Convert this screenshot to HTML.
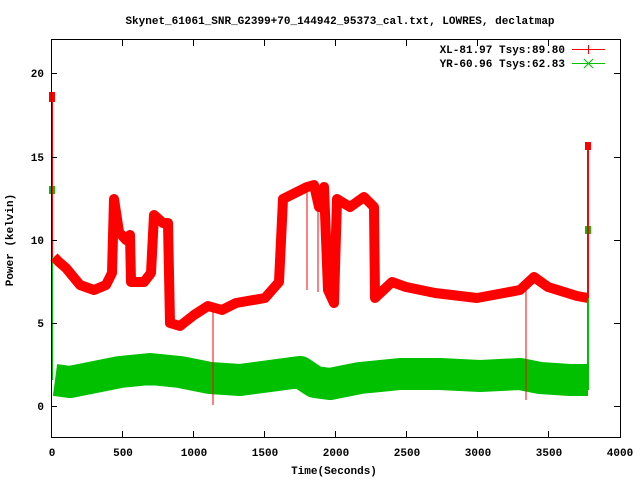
<!DOCTYPE html>
<html><head><style>
body{margin:0;background:#fff;}
svg text{font-family:"Liberation Mono",monospace;font-weight:bold;font-size:11px;fill:#000;}
</style></head><body>
<svg width="640" height="480" viewBox="0 0 640 480" xmlns="http://www.w3.org/2000/svg">
<rect width="640" height="480" fill="#fff"/>
<text x="340" y="24" text-anchor="middle">Skynet_61061_SNR_G2399+70_144942_95373_cal.txt, LOWRES, declatmap</text>
<g stroke="#00c000" fill="none">
<polyline stroke-width="32" stroke-linejoin="round" points="55,380 70,382 90,378 120,372 150,369 180,372 210,378 240,380 270,376 300,372 315,382 330,384 360,378 400,374 440,374 480,376 520,374 540,378 570,380 588,380"/>
<line x1="52" y1="190" x2="52" y2="380" stroke-width="2"/>
<line x1="588" y1="230" x2="588" y2="390" stroke-width="2"/>
<line x1="52" y1="186" x2="52" y2="194" stroke-width="6"/>
<line x1="588" y1="226" x2="588" y2="234" stroke-width="6"/>
</g>
<g stroke="#ff0000" fill="none">
<polyline stroke-width="10" stroke-linejoin="round" points="54,257 59,262 66,268 80,285 94,290 106,285 112,273 114,199 119,232 126,240 130,235 131,282 144,282 151,273 154,215 163,223 168,223 170,323 180,326 194,315 208,306 222,310 236,303 265,298 279,282 283,199 293,194 307,187 314,185 319,207 324,187 328,290 334,303 337,199 350,207 364,197 374,207 375,298 392,282 406,287 435,293 477,298 520,290 534,277 548,287 577,296 588,298"/>
<line x1="52" y1="97" x2="52" y2="257" stroke-width="2"/>
<line x1="588" y1="146" x2="588" y2="298" stroke-width="2"/>
<line x1="52" y1="92" x2="52" y2="102" stroke-width="6"/>
<line x1="588" y1="142" x2="588" y2="150" stroke-width="6"/>
<line x1="213" y1="306" x2="213" y2="405" stroke-width="1"/>
<line x1="526" y1="280" x2="526" y2="400" stroke-width="1"/>
<line x1="307" y1="190" x2="307" y2="290" stroke-width="1"/>
<line x1="318" y1="200" x2="318" y2="292" stroke-width="1"/>
</g>
<rect x="51.5" y="39.5" width="569" height="398" fill="none" stroke="#000" stroke-width="1"/>
<g stroke="#000" stroke-width="1">
<line x1="51" y1="406.5" x2="57" y2="406.5"/><line x1="614" y1="406.5" x2="620" y2="406.5"/>
<line x1="51" y1="323.5" x2="57" y2="323.5"/><line x1="614" y1="323.5" x2="620" y2="323.5"/>
<line x1="51" y1="240.5" x2="57" y2="240.5"/><line x1="614" y1="240.5" x2="620" y2="240.5"/>
<line x1="51" y1="157.5" x2="57" y2="157.5"/><line x1="614" y1="157.5" x2="620" y2="157.5"/>
<line x1="51" y1="73.5" x2="57" y2="73.5"/><line x1="614" y1="73.5" x2="620" y2="73.5"/>
<line x1="122.5" y1="437" x2="122.5" y2="431"/><line x1="122.5" y1="40" x2="122.5" y2="46"/>
<line x1="193.5" y1="437" x2="193.5" y2="431"/><line x1="193.5" y1="40" x2="193.5" y2="46"/>
<line x1="264.5" y1="437" x2="264.5" y2="431"/><line x1="264.5" y1="40" x2="264.5" y2="46"/>
<line x1="335.5" y1="437" x2="335.5" y2="431"/><line x1="335.5" y1="40" x2="335.5" y2="46"/>
<line x1="406.5" y1="437" x2="406.5" y2="431"/><line x1="406.5" y1="40" x2="406.5" y2="46"/>
<line x1="477.5" y1="437" x2="477.5" y2="431"/><line x1="477.5" y1="40" x2="477.5" y2="46"/>
<line x1="548.5" y1="437" x2="548.5" y2="431"/><line x1="548.5" y1="40" x2="548.5" y2="46"/>
</g>
<g text-anchor="end">
<text x="44" y="410">0</text><text x="44" y="327">5</text><text x="44" y="244">10</text><text x="44" y="161">15</text><text x="44" y="77">20</text>
</g>
<g text-anchor="middle">
<text x="52" y="456">0</text><text x="123" y="456">500</text><text x="194" y="456">1000</text><text x="265" y="456">1500</text><text x="336" y="456">2000</text><text x="407" y="456">2500</text><text x="478" y="456">3000</text><text x="549" y="456">3500</text><text x="620" y="456">4000</text>
<text x="334" y="474">Time(Seconds)</text>
<text transform="translate(13,240) rotate(-90)">Power (kelvin)</text>
</g>
<g text-anchor="end">
<text x="565" y="53">XL-81.97 Tsys:89.80</text>
<text x="565" y="67">YR-60.96 Tsys:62.83</text>
</g>
<line x1="572" y1="49.5" x2="605" y2="49.5" stroke="#ff0000"/>
<line x1="588.5" y1="45" x2="588.5" y2="54" stroke="#ff0000"/>
<line x1="572" y1="63.5" x2="605" y2="63.5" stroke="#00c000"/>
<path d="M584 59 L593 68 M593 59 L584 68" stroke="#00c000"/>
</svg>
</body></html>
